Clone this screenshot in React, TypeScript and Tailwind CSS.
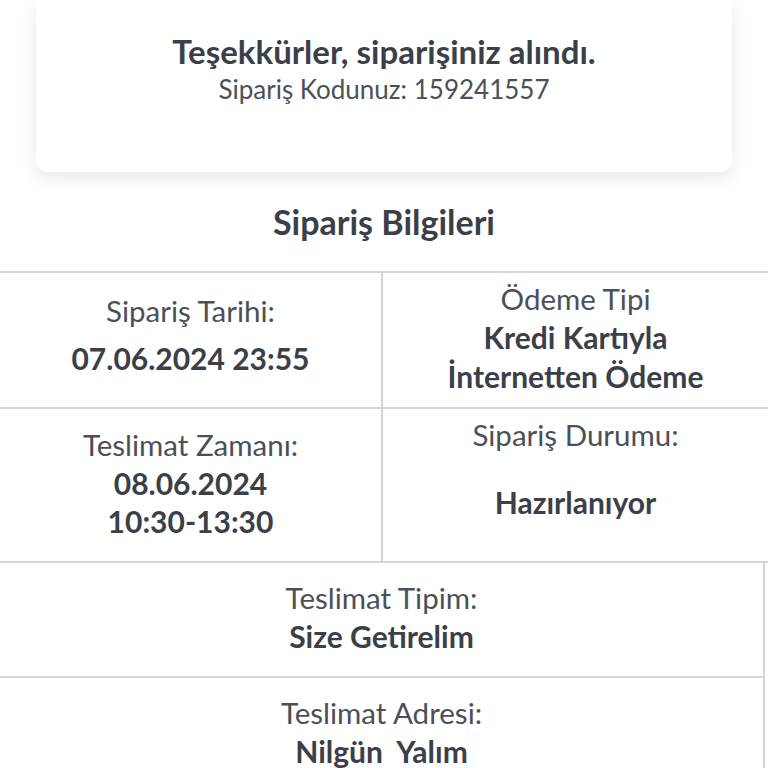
import React from 'react';

const font = { fontFamily: 'Lato, "Noto Sans", "Liberation Sans", sans-serif' };

function Label({ children }: { children: React.ReactNode }) {
  return <div className="text-[29.5px] leading-[39px] text-[#4b5058]">{children}</div>;
}

function Value({ children, className = '' }: { children: React.ReactNode; className?: string }) {
  return (
    <div className={`text-[30px] leading-[39px] font-bold text-[#3b4048] ${className}`}>{children}</div>
  );
}

export default function App() {
  return (
    <div className="min-h-screen bg-white overflow-hidden text-center" style={font}>
      <div className="mx-9 h-[172px] bg-white rounded-b-xl shadow-[0_6px_18px_rgba(0,0,0,0.09)] flex flex-col items-center pt-[32px]">
        <h1 className="text-[33px] leading-[38px] font-bold text-[#3b4048]">Teşekkürler, siparişiniz alındı.</h1>
        <p className="text-[26px] leading-[34px] text-[#4b5058] mt-[2px]">Sipariş Kodunuz: 159241557</p>
      </div>

      <h2 className="mt-[31px] text-[34px] leading-[38px] font-bold text-[#3b4048]">Sipariş Bilgileri</h2>

      <div className="mt-[30px] border-t-2 border-[#d3d6d9]">
        <div className="grid grid-cols-[383px_1fr] border-b-2 border-[#d3d6d9]">
          <div className="h-[134px] border-r-2 border-[#d3d6d9] flex flex-col items-center justify-center pb-[12px]">
            <Label>Sipariş Tarihi:</Label>
            <Value className="mt-[9px]">07.06.2024 23:55</Value>
          </div>
          <div className="h-[134px] flex flex-col items-center justify-center pb-[5px]">
            <Label>Ödeme Tipi</Label>
            <Value>Kredi Kartıyla</Value>
            <Value>İnternetten Ödeme</Value>
          </div>
        </div>
        <div className="grid grid-cols-[383px_1fr] border-b-2 border-[#d3d6d9]">
          <div className="h-[152px] border-r-2 border-[#d3d6d9] flex flex-col items-center justify-center pb-[5px]">
            <Label>Teslimat Zamanı:</Label>
            <Value>08.06.2024</Value>
            <Value className="-mt-[1px]">10:30-13:30</Value>
          </div>
          <div className="h-[152px] flex flex-col items-center pt-[6px]">
            <Label>Sipariş Durumu:</Label>
            <Value className="mt-[29px]">Hazırlanıyor</Value>
          </div>
        </div>
        <div className="mr-[3px] border-r-2 border-b-2 border-[#d3d6d9] h-[115px] flex flex-col items-center justify-center pb-[5px]">
          <Label>Teslimat Tipim:</Label>
          <Value>Size Getirelim</Value>
        </div>
        <div className="mr-[3px] border-r-2 border-[#d3d6d9] h-[115px] flex flex-col items-center pt-[15px]">
          <Label>Teslimat Adresi:</Label>
          <Value className="whitespace-pre">Nilgün  Yalım</Value>
        </div>
      </div>
    </div>
  );
}
